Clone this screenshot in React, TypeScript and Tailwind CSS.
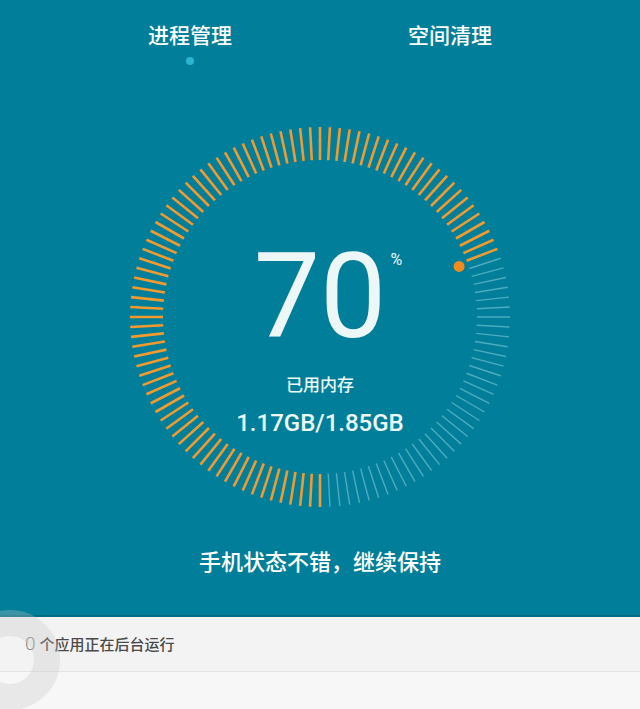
import React from "react";

const N = 120;
const CX = 200;
const CY = 200;

function Gauge() {
  const ticks = [];
  for (let i = 0; i < N; i++) {
    const a = (i * 360) / N;
    const orange = a >= 180 || a <= 69;
    const rad = (a * Math.PI) / 180;
    const r1 = 157;
    const r2 = 190;
    const x1 = CX + r1 * Math.sin(rad);
    const y1 = CY - r1 * Math.cos(rad);
    const x2 = CX + r2 * Math.sin(rad);
    const y2 = CY - r2 * Math.cos(rad);
    ticks.push(
      <line
        key={i}
        x1={x1}
        y1={y1}
        x2={x2}
        y2={y2}
        stroke={orange ? "#f29a2e" : "rgba(130,200,218,0.6)"}
        strokeWidth={orange ? 2.6 : 1.4}
      />
    );
  }
  const da = (70 * Math.PI) / 180;
  return (
    <svg width="400" height="400" viewBox="0 0 400 400" className="block">
      {ticks}
      <circle cx={CX + 148 * Math.sin(da)} cy={CY - 148 * Math.cos(da)} r="5.5" fill="#f28b1e" />
    </svg>
  );
}

export default function App() {
  const cjk = { fontFamily: '"Noto Sans CJK SC", "Noto Sans", sans-serif' };
  return (
    <div className="relative w-[640px] h-[709px] overflow-hidden bg-[#f7f7f7]" style={cjk}>
      <div className="h-[617px] bg-[#017f9a] flex flex-col items-center border-b-2 border-[#016d85]">
        <div className="w-full grid grid-cols-2 px-[60px] pt-[19px]">
          <div className="flex flex-col items-center">
            <span className="text-[21px] leading-[30px] font-medium text-white">进程管理</span>
            <span className="mt-[8px] w-[8px] h-[8px] rounded-full bg-[#2ab5d5]" />
          </div>
          <div className="flex flex-col items-center">
            <span className="text-[21px] leading-[30px] font-medium text-white">空间清理</span>
          </div>
        </div>
        <div className="relative mt-[52px] w-[400px] h-[400px]">
          <Gauge />
          <div className="absolute inset-0 flex flex-col items-center">
            <div className="relative mt-[110px] flex items-start">
              <span
                className="text-[118px] leading-[140px] font-normal text-[#eef7f8]"
                style={{ fontFamily: "Roboto, sans-serif" }}
              >
                70
              </span>
              <span
                className="absolute right-[-16px] top-[25px] text-[16px] leading-[16px] text-[#eef7f8]"
                style={{ fontFamily: "Roboto, sans-serif" }}
              >
                %
              </span>
            </div>
            <span className="mt-[5px] text-[17px] leading-[24px] font-medium text-[#eef7f8]">已用内存</span>
            <span
              className="mt-[12px] text-[24px] leading-[30px] font-medium text-[#eef7f8]"
              style={{ fontFamily: "Roboto, sans-serif" }}
            >
              1.17GB/1.85GB
            </span>
          </div>
        </div>
        <div className="mt-[28px] text-[22px] leading-[30px] font-medium text-white">手机状态不错，继续保持</div>
      </div>
      <div className="h-[55px] bg-[#f3f3f3] flex items-center pl-[25px] border-b border-[#e3e3e3]">
        <span className="text-[19px] font-light text-[#8a8a8a]" style={{ fontFamily: "Roboto, sans-serif" }}>
          0
        </span>
        <span className="ml-[4px] text-[15px] font-medium text-[#4a4a4a]">个应用正在后台运行</span>
      </div>
      <div className="pointer-events-none absolute left-[-40px] top-[610px] w-[100px] h-[100px] rounded-full border-[26px] border-[rgba(200,200,200,0.3)]" />
    </div>
  );
}
